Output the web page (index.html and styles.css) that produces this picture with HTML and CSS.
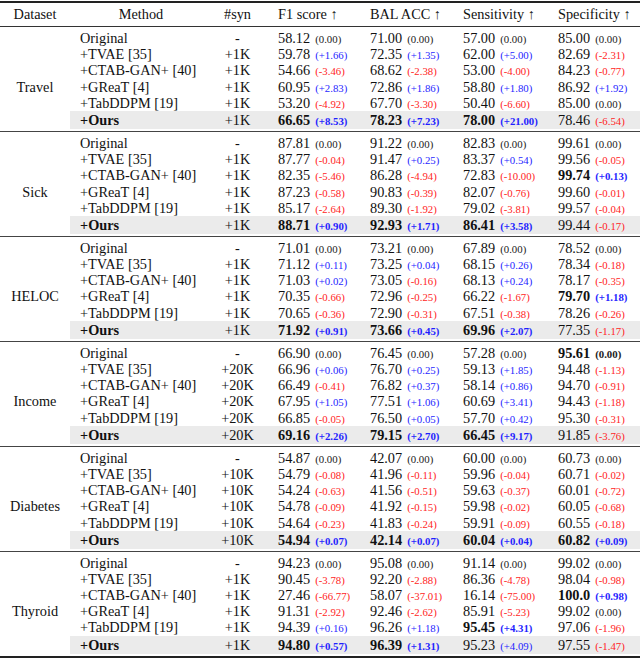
FILE: index.html
```html
<!DOCTYPE html>
<html>
<head>
<meta charset="utf-8">
<link rel="stylesheet" href="styles.css">
</head>
<body>
<div class="tbl">
  <div class="r head">
    <span class="ds">Dataset</span><span class="mh">Method</span><span class="s">#syn</span><span class="v1">F1 score ↑</span><span class="v">BAL ACC ↑</span><span class="v">Sensitivity ↑</span><span class="v">Specificity ↑</span>
  </div>

  <div class="g">
    <div class="r"><span></span><span class="m">Original</span><span class="s">-</span><span class="v1">58.12 <i class="d z">(0.00)</i></span><span class="v">71.00 <i class="d z">(0.00)</i></span><span class="v">57.00 <i class="d z">(0.00)</i></span><span class="v">85.00 <i class="d z">(0.00)</i></span></div>
    <div class="r"><span></span><span class="m">+TVAE [35]</span><span class="s">+1K</span><span class="v1">59.78 <i class="d p">(+1.66)</i></span><span class="v">72.35 <i class="d p">(+1.35)</i></span><span class="v">62.00 <i class="d p">(+5.00)</i></span><span class="v">82.69 <i class="d n">(-2.31)</i></span></div>
    <div class="r"><span></span><span class="m">+CTAB-GAN+ [40]</span><span class="s">+1K</span><span class="v1">54.66 <i class="d n">(-3.46)</i></span><span class="v">68.62 <i class="d n">(-2.38)</i></span><span class="v">53.00 <i class="d n">(-4.00)</i></span><span class="v">84.23 <i class="d n">(-0.77)</i></span></div>
    <div class="r"><span class="ds">Travel</span><span class="m">+GReaT [4]</span><span class="s">+1K</span><span class="v1">60.95 <i class="d p">(+2.83)</i></span><span class="v">72.86 <i class="d p">(+1.86)</i></span><span class="v">58.80 <i class="d p">(+1.80)</i></span><span class="v">86.92 <i class="d p">(+1.92)</i></span></div>
    <div class="r"><span></span><span class="m">+TabDDPM [19]</span><span class="s">+1K</span><span class="v1">53.20 <i class="d n">(-4.92)</i></span><span class="v">67.70 <i class="d n">(-3.30)</i></span><span class="v">50.40 <i class="d n">(-6.60)</i></span><span class="v">85.00 <i class="d z">(0.00)</i></span></div>
    <div class="r ours"><span></span><span class="m b">+Ours</span><span class="s">+1K</span><span class="v1 b">66.65 <i class="d p">(+8.53)</i></span><span class="v b">78.23 <i class="d p">(+7.23)</i></span><span class="v b">78.00 <i class="d p">(+21.00)</i></span><span class="v">78.46 <i class="d n">(-6.54)</i></span></div>
  </div>

  <div class="g">
    <div class="r"><span></span><span class="m">Original</span><span class="s">-</span><span class="v1">87.81 <i class="d z">(0.00)</i></span><span class="v">91.22 <i class="d z">(0.00)</i></span><span class="v">82.83 <i class="d z">(0.00)</i></span><span class="v">99.61 <i class="d z">(0.00)</i></span></div>
    <div class="r"><span></span><span class="m">+TVAE [35]</span><span class="s">+1K</span><span class="v1">87.77 <i class="d n">(-0.04)</i></span><span class="v">91.47 <i class="d p">(+0.25)</i></span><span class="v">83.37 <i class="d p">(+0.54)</i></span><span class="v">99.56 <i class="d n">(-0.05)</i></span></div>
    <div class="r"><span></span><span class="m">+CTAB-GAN+ [40]</span><span class="s">+1K</span><span class="v1">82.35 <i class="d n">(-5.46)</i></span><span class="v">86.28 <i class="d n">(-4.94)</i></span><span class="v">72.83 <i class="d n">(-10.00)</i></span><span class="v b">99.74 <i class="d p">(+0.13)</i></span></div>
    <div class="r"><span class="ds">Sick</span><span class="m">+GReaT [4]</span><span class="s">+1K</span><span class="v1">87.23 <i class="d n">(-0.58)</i></span><span class="v">90.83 <i class="d n">(-0.39)</i></span><span class="v">82.07 <i class="d n">(-0.76)</i></span><span class="v">99.60 <i class="d n">(-0.01)</i></span></div>
    <div class="r"><span></span><span class="m">+TabDDPM [19]</span><span class="s">+1K</span><span class="v1">85.17 <i class="d n">(-2.64)</i></span><span class="v">89.30 <i class="d n">(-1.92)</i></span><span class="v">79.02 <i class="d n">(-3.81)</i></span><span class="v">99.57 <i class="d n">(-0.04)</i></span></div>
    <div class="r ours"><span></span><span class="m b">+Ours</span><span class="s">+1K</span><span class="v1 b">88.71 <i class="d p">(+0.90)</i></span><span class="v b">92.93 <i class="d p">(+1.71)</i></span><span class="v b">86.41 <i class="d p">(+3.58)</i></span><span class="v">99.44 <i class="d n">(-0.17)</i></span></div>
  </div>

  <div class="g">
    <div class="r"><span></span><span class="m">Original</span><span class="s">-</span><span class="v1">71.01 <i class="d z">(0.00)</i></span><span class="v">73.21 <i class="d z">(0.00)</i></span><span class="v">67.89 <i class="d z">(0.00)</i></span><span class="v">78.52 <i class="d z">(0.00)</i></span></div>
    <div class="r"><span></span><span class="m">+TVAE [35]</span><span class="s">+1K</span><span class="v1">71.12 <i class="d p">(+0.11)</i></span><span class="v">73.25 <i class="d p">(+0.04)</i></span><span class="v">68.15 <i class="d p">(+0.26)</i></span><span class="v">78.34 <i class="d n">(-0.18)</i></span></div>
    <div class="r"><span></span><span class="m">+CTAB-GAN+ [40]</span><span class="s">+1K</span><span class="v1">71.03 <i class="d p">(+0.02)</i></span><span class="v">73.05 <i class="d n">(-0.16)</i></span><span class="v">68.13 <i class="d p">(+0.24)</i></span><span class="v">78.17 <i class="d n">(-0.35)</i></span></div>
    <div class="r"><span class="ds">HELOC</span><span class="m">+GReaT [4]</span><span class="s">+1K</span><span class="v1">70.35 <i class="d n">(-0.66)</i></span><span class="v">72.96 <i class="d n">(-0.25)</i></span><span class="v">66.22 <i class="d n">(-1.67)</i></span><span class="v b">79.70 <i class="d p">(+1.18)</i></span></div>
    <div class="r"><span></span><span class="m">+TabDDPM [19]</span><span class="s">+1K</span><span class="v1">70.65 <i class="d n">(-0.36)</i></span><span class="v">72.90 <i class="d n">(-0.31)</i></span><span class="v">67.51 <i class="d n">(-0.38)</i></span><span class="v">78.26 <i class="d n">(-0.26)</i></span></div>
    <div class="r ours"><span></span><span class="m b">+Ours</span><span class="s">+1K</span><span class="v1 b">71.92 <i class="d p">(+0.91)</i></span><span class="v b">73.66 <i class="d p">(+0.45)</i></span><span class="v b">69.96 <i class="d p">(+2.07)</i></span><span class="v">77.35 <i class="d n">(-1.17)</i></span></div>
  </div>

  <div class="g">
    <div class="r"><span></span><span class="m">Original</span><span class="s">-</span><span class="v1">66.90 <i class="d z">(0.00)</i></span><span class="v">76.45 <i class="d z">(0.00)</i></span><span class="v">57.28 <i class="d z">(0.00)</i></span><span class="v b">95.61 <i class="d z">(0.00)</i></span></div>
    <div class="r"><span></span><span class="m">+TVAE [35]</span><span class="s">+20K</span><span class="v1">66.96 <i class="d p">(+0.06)</i></span><span class="v">76.70 <i class="d p">(+0.25)</i></span><span class="v">59.13 <i class="d p">(+1.85)</i></span><span class="v">94.48 <i class="d n">(-1.13)</i></span></div>
    <div class="r"><span></span><span class="m">+CTAB-GAN+ [40]</span><span class="s">+20K</span><span class="v1">66.49 <i class="d n">(-0.41)</i></span><span class="v">76.82 <i class="d p">(+0.37)</i></span><span class="v">58.14 <i class="d p">(+0.86)</i></span><span class="v">94.70 <i class="d n">(-0.91)</i></span></div>
    <div class="r"><span class="ds">Income</span><span class="m">+GReaT [4]</span><span class="s">+20K</span><span class="v1">67.95 <i class="d p">(+1.05)</i></span><span class="v">77.51 <i class="d p">(+1.06)</i></span><span class="v">60.69 <i class="d p">(+3.41)</i></span><span class="v">94.43 <i class="d n">(-1.18)</i></span></div>
    <div class="r"><span></span><span class="m">+TabDDPM [19]</span><span class="s">+20K</span><span class="v1">66.85 <i class="d n">(-0.05)</i></span><span class="v">76.50 <i class="d p">(+0.05)</i></span><span class="v">57.70 <i class="d p">(+0.42)</i></span><span class="v">95.30 <i class="d n">(-0.31)</i></span></div>
    <div class="r ours"><span></span><span class="m b">+Ours</span><span class="s">+20K</span><span class="v1 b">69.16 <i class="d p">(+2.26)</i></span><span class="v b">79.15 <i class="d p">(+2.70)</i></span><span class="v b">66.45 <i class="d p">(+9.17)</i></span><span class="v">91.85 <i class="d n">(-3.76)</i></span></div>
  </div>

  <div class="g">
    <div class="r"><span></span><span class="m">Original</span><span class="s">-</span><span class="v1">54.87 <i class="d z">(0.00)</i></span><span class="v">42.07 <i class="d z">(0.00)</i></span><span class="v">60.00 <i class="d z">(0.00)</i></span><span class="v">60.73 <i class="d z">(0.00)</i></span></div>
    <div class="r"><span></span><span class="m">+TVAE [35]</span><span class="s">+10K</span><span class="v1">54.79 <i class="d n">(-0.08)</i></span><span class="v">41.96 <i class="d n">(-0.11)</i></span><span class="v">59.96 <i class="d n">(-0.04)</i></span><span class="v">60.71 <i class="d n">(-0.02)</i></span></div>
    <div class="r"><span></span><span class="m">+CTAB-GAN+ [40]</span><span class="s">+10K</span><span class="v1">54.24 <i class="d n">(-0.63)</i></span><span class="v">41.56 <i class="d n">(-0.51)</i></span><span class="v">59.63 <i class="d n">(-0.37)</i></span><span class="v">60.01 <i class="d n">(-0.72)</i></span></div>
    <div class="r"><span class="ds">Diabetes</span><span class="m">+GReaT [4]</span><span class="s">+10K</span><span class="v1">54.78 <i class="d n">(-0.09)</i></span><span class="v">41.92 <i class="d n">(-0.15)</i></span><span class="v">59.98 <i class="d n">(-0.02)</i></span><span class="v">60.05 <i class="d n">(-0.68)</i></span></div>
    <div class="r"><span></span><span class="m">+TabDDPM [19]</span><span class="s">+10K</span><span class="v1">54.64 <i class="d n">(-0.23)</i></span><span class="v">41.83 <i class="d n">(-0.24)</i></span><span class="v">59.91 <i class="d n">(-0.09)</i></span><span class="v">60.55 <i class="d n">(-0.18)</i></span></div>
    <div class="r ours"><span></span><span class="m b">+Ours</span><span class="s">+10K</span><span class="v1 b">54.94 <i class="d p">(+0.07)</i></span><span class="v b">42.14 <i class="d p">(+0.07)</i></span><span class="v b">60.04 <i class="d p">(+0.04)</i></span><span class="v b">60.82 <i class="d p">(+0.09)</i></span></div>
  </div>

  <div class="g last">
    <div class="r"><span></span><span class="m">Original</span><span class="s">-</span><span class="v1">94.23 <i class="d z">(0.00)</i></span><span class="v">95.08 <i class="d z">(0.00)</i></span><span class="v">91.14 <i class="d z">(0.00)</i></span><span class="v">99.02 <i class="d z">(0.00)</i></span></div>
    <div class="r"><span></span><span class="m">+TVAE [35]</span><span class="s">+1K</span><span class="v1">90.45 <i class="d n">(-3.78)</i></span><span class="v">92.20 <i class="d n">(-2.88)</i></span><span class="v">86.36 <i class="d n">(-4.78)</i></span><span class="v">98.04 <i class="d n">(-0.98)</i></span></div>
    <div class="r"><span></span><span class="m">+CTAB-GAN+ [40]</span><span class="s">+1K</span><span class="v1">27.46 <i class="d n">(-66.77)</i></span><span class="v">58.07 <i class="d n">(-37.01)</i></span><span class="v">16.14 <i class="d n">(-75.00)</i></span><span class="v b">100.0 <i class="d p">(+0.98)</i></span></div>
    <div class="r"><span class="ds">Thyroid</span><span class="m">+GReaT [4]</span><span class="s">+1K</span><span class="v1">91.31 <i class="d n">(-2.92)</i></span><span class="v">92.46 <i class="d n">(-2.62)</i></span><span class="v">85.91 <i class="d n">(-5.23)</i></span><span class="v">99.02 <i class="d z">(0.00)</i></span></div>
    <div class="r"><span></span><span class="m">+TabDDPM [19]</span><span class="s">+1K</span><span class="v1">94.39 <i class="d p">(+0.16)</i></span><span class="v">96.26 <i class="d p">(+1.18)</i></span><span class="v b">95.45 <i class="d p">(+4.31)</i></span><span class="v">97.06 <i class="d n">(-1.96)</i></span></div>
    <div class="r ours"><span></span><span class="m b">+Ours</span><span class="s">+1K</span><span class="v1 b">94.80 <i class="d p">(+0.57)</i></span><span class="v b">96.39 <i class="d p">(+1.31)</i></span><span class="v">95.23 <i class="d p">(+4.09)</i></span><span class="v">97.55 <i class="d n">(-1.47)</i></span></div>
  </div>
</div>
</body>
</html>
```
FILE: styles.css
```css
html, body {
  margin: 0;
  padding: 0;
  background: #fff;
}
body {
  font-family: "Liberation Serif", "Times New Roman", serif;
  font-size: 14.3px;
  color: #111;
}
.tbl {
  width: 640px;
  padding-top: 1px;
}
.r {
  display: grid;
  grid-template-columns: 70px 142px 51px 97px 93px 95px 92px;
  height: 16.2px;
  line-height: 16.2px;
  white-space: nowrap;
}
.head {
  height: 23px;
  line-height: 23px;
  border-top: 2px solid #222;
  border-bottom: 1px solid #333;
}
.g {
  padding: 3px 0 2px;
}
.g + .g {
  border-top: 1px solid #444;
}
.g.last {
  border-bottom: 2px solid #222;
}
.ours {
  height: 18px;
  line-height: 18px;
  background: linear-gradient(to right, transparent 70px, #ebebeb 70px);
}
.ds, .mh, .s {
  text-align: center;
}
.m {
  padding-left: 10px;
}
.v1 {
  padding-left: 15px;
}
.v {
  padding-left: 10px;
}
.b {
  font-weight: bold;
}
.d {
  font-style: normal;
  font-size: 10.8px;
  margin-left: 1.4px;
}
.p { color: #1f1fff; }
.n { color: #ff2424; }
.z { color: #222; }
```
